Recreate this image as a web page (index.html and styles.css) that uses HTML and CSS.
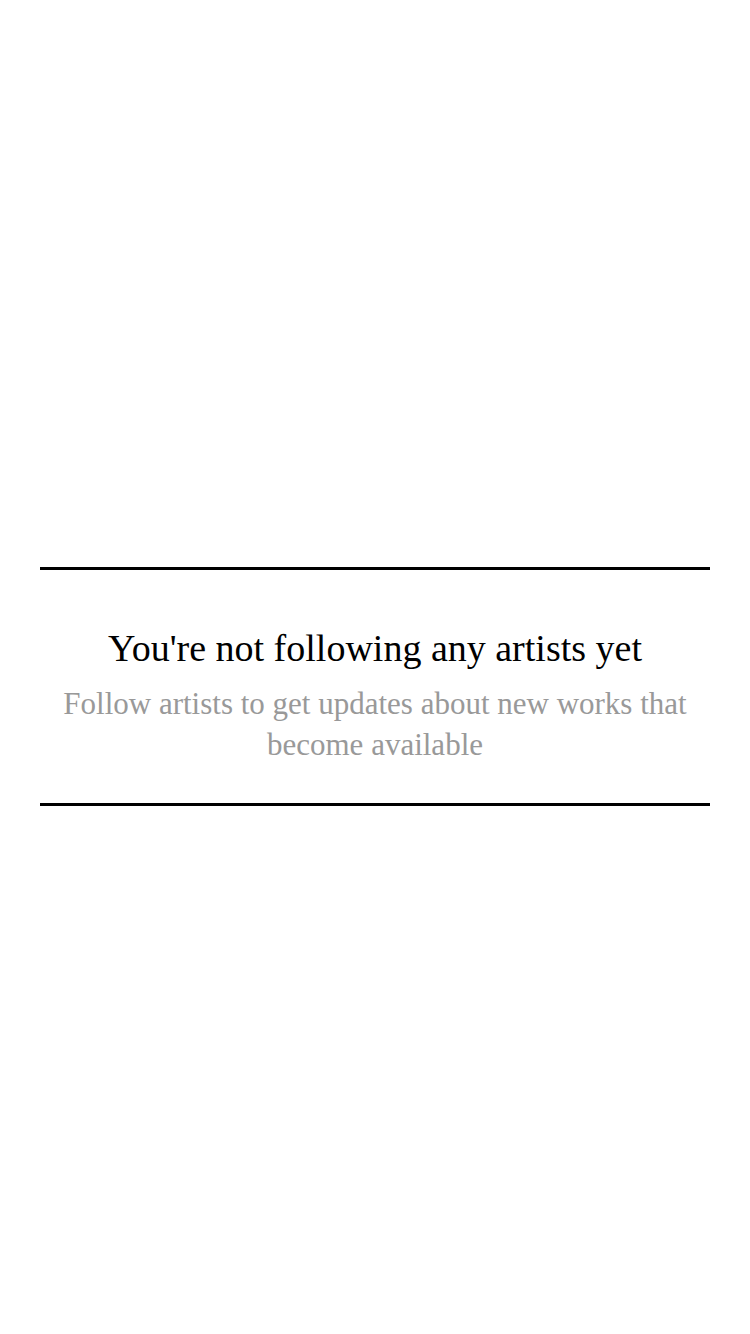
FILE: index.html
```html
<!DOCTYPE html>
<html>
<head>
<meta charset="utf-8">
<link rel="stylesheet" href="styles.css">
</head>
<body>
<main class="page">
  <section class="empty">
    <h1 class="empty-title">You're not following any artists yet</h1>
    <p class="empty-text">Follow artists to get updates about new works that become available</p>
  </section>
</main>
</body>
</html>
```
FILE: styles.css
```css
html, body {
  margin: 0;
  padding: 0;
  background: #fff;
}
.page {
  width: 750px;
  height: 1334px;
  padding: 567px 40px 0;
  box-sizing: border-box;
}
.empty {
  border-top: 3px solid #000;
  border-bottom: 3px solid #000;
  padding: 54px 20px 38px;
  text-align: center;
  font-family: "Liberation Serif", "Times New Roman", serif;
}
.empty-title {
  margin: 0;
  font-weight: normal;
  font-size: 38px;
  line-height: 48px;
  color: #000;
}
.empty-text {
  margin: 11px 0 0;
  font-size: 31px;
  line-height: 41px;
  color: #999;
}
```
